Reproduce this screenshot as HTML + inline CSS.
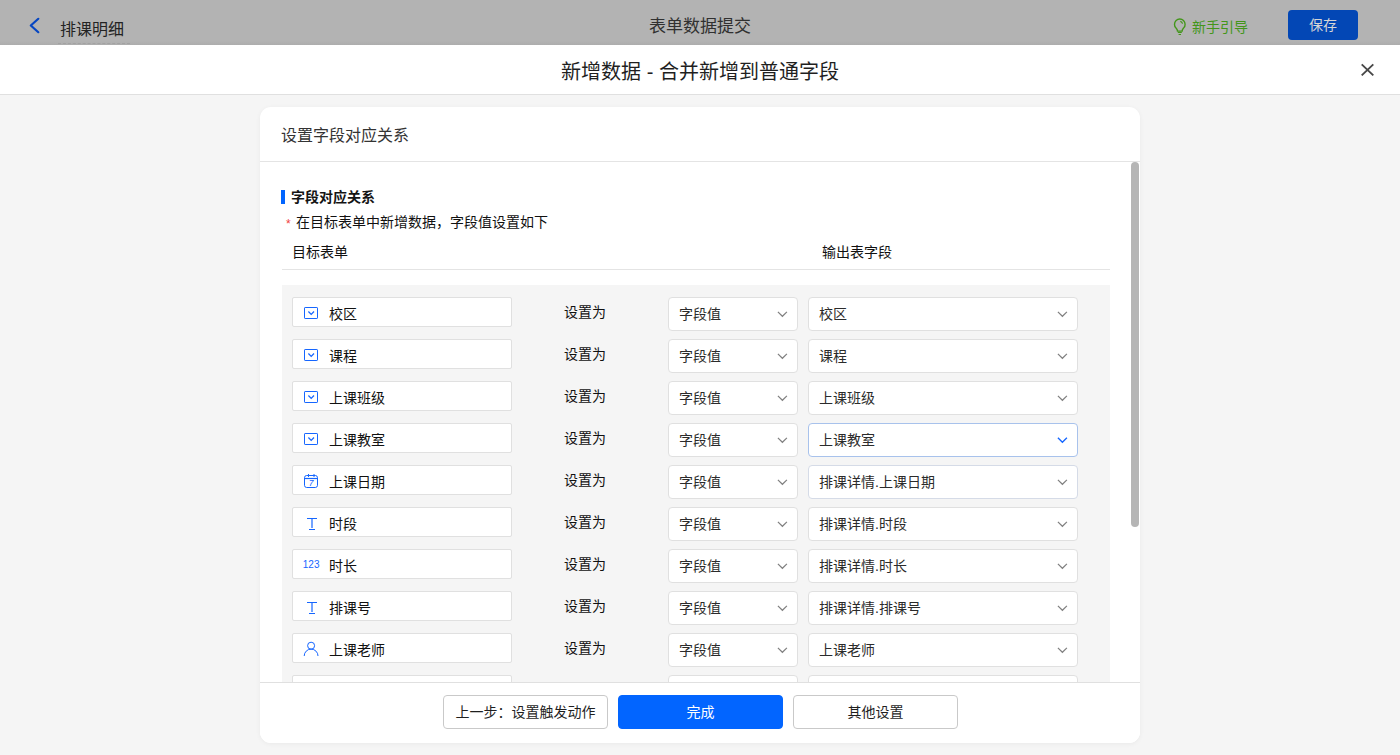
<!DOCTYPE html>
<html lang="zh-CN">
<head>
<meta charset="utf-8">
<title>表单数据提交</title>
<style>
*{box-sizing:border-box;margin:0;padding:0}
html,body{width:1400px;height:755px;overflow:hidden;background:#f5f5f5}
body{position:relative;font-family:"Liberation Sans","Noto Sans CJK SC",sans-serif;font-size:14px;color:#111;line-height:1}
.abs{position:absolute;white-space:nowrap}
/* top bar (dimmed) */
#topbar{position:absolute;left:0;top:0;width:1400px;height:45px;background:linear-gradient(#b3b3b3 0,#b3b3b3 41px,#adadad 45px)}
#back{left:29px;top:17px;width:11px;height:17px}
#appname{left:60px;top:21px;font-size:16px;color:#232323;line-height:18px}
#appname-line{left:58px;top:43px;width:72px;height:0;border-top:1px dashed #a2a2a2}
#toptitle{left:600px;width:200px;text-align:center;top:17px;font-size:17px;line-height:20px;color:#303030}
#guide{left:1192px;top:18px;font-size:14px;line-height:18px;color:#43961a}
#bulb{left:1172px;top:18px;width:15px;height:18px;overflow:visible}
#save{left:1288px;top:10px;width:70px;height:30px;border-radius:4px;background:#0347b5;color:#d6d6d6;font-size:14px;line-height:30px;text-align:center}
/* modal header */
#mhead{position:absolute;left:0;top:45px;width:1400px;height:50px;background:#fff;border-bottom:1px solid #e0e0e0}
#mtitle{left:400px;width:600px;text-align:center;top:60px;font-size:20px;line-height:24px;color:#1f1f1f}
#close{left:1360px;top:62px;width:15px;height:15px}
/* card */
#card{position:absolute;left:260px;top:107px;width:880px;height:636px;background:#fff;border-radius:11px;overflow:hidden;box-shadow:0 1px 5px rgba(0,0,0,.05)}
#chead{left:21px;top:19px;font-size:16px;line-height:20px;color:#333}
#cline{left:0;top:54px;width:880px;height:1px;background:#e4e4e4}
#scroll{position:absolute;left:0;top:55px;width:880px;height:520px;overflow:hidden}
#thumb{left:871px;top:0;width:8px;height:365px;border-radius:4px;background:#b5b5b5}
#bar{left:21px;top:28px;width:4px;height:14px;background:#0265ff}
#stitle{left:31px;top:26px;font-size:14px;font-weight:bold;line-height:18px;color:#141414}
#star{left:26px;top:55px;font-size:12px;line-height:14px;color:#f04040}
#sdesc{left:36px;top:51px;line-height:18px;color:#111}
#h1{left:32px;top:81px;line-height:18px}
#h2{left:562px;top:81px;line-height:18px}
#hline{left:22px;top:107px;width:828px;height:1px;background:#e4e4e4}
#gray{left:22px;top:123px;width:828px;height:420px;background:#f5f5f5}
.row{position:absolute;left:0;width:828px;height:34px}
.fin{position:absolute;left:10px;top:0;width:220px;height:30px;background:#fff;border:1px solid #e0e0e0;border-radius:2px}
.fin .ic{position:absolute;left:9px;top:6px;width:20px;height:18px}
.fin .tx{position:absolute;left:36px;top:7px;line-height:18px;white-space:nowrap}
.setas{position:absolute;left:260px;width:86px;top:6px;text-align:center;line-height:18px}
.sel{position:absolute;top:0;height:34px;background:#fff;border:1px solid #e0e0e0;border-radius:4px}
.sel.a{left:386px;width:130px}
.sel.b{left:526px;width:270px}
.sel .tx{position:absolute;left:10px;top:7px;line-height:18px;white-space:nowrap;color:#2b2b2b}
.sel svg{position:absolute;right:9px;top:12px;width:12px;height:8px}
.sel.focus{border-color:#a8c2ec}
/* footer */
#foot{position:absolute;left:0;top:575px;width:880px;height:61px;background:#fff;border-top:1px solid #e0e0e0}
.btn{position:absolute;top:12px;width:165px;height:34px;border-radius:4px;border:1px solid #c9c9c9;background:#fff;text-align:center;line-height:32px;font-size:14px;color:#1f1f1f}
.btn.p{background:#0265ff;border-color:#0265ff;color:#fff}
</style>
</head>
<body>
<div id="topbar"></div>
<svg id="back" class="abs" viewBox="0 0 11 17"><path d="M9.300 1.800 L1.800 8.500 L9.300 15.200" fill="none" stroke="#0646c2" stroke-width="2.200" stroke-linecap="round" stroke-linejoin="round"/></svg>
<div id="appname" class="abs">排课明细</div>
<div id="appname-line" class="abs"></div>
<div id="toptitle" class="abs">表单数据提交</div>
<svg id="bulb" class="abs" viewBox="0 0 15 18"><path d="M5.500 13.100 C5.500 11.600 4.700 10.900 3.900 9.900 A5.300 5.300 0 1 1 11.700 9.900 C10.900 10.900 10.100 11.600 10.100 13.100 Z" fill="none" stroke="#43961a" stroke-width="1.400"/><path d="M5.800 14.500 H9.800 M6.600 16.500 H9" stroke="#43961a" stroke-width="1" fill="none"/><path d="M8.300 3.400 A2.700 2.700 0 0 1 10.500 5.800" stroke="#43961a" stroke-width="1.100" fill="none"/></svg>
<div id="guide" class="abs">新手引导</div>
<div id="save" class="abs">保存</div>

<div id="mhead"></div>
<div id="mtitle" class="abs">新增数据 - 合并新增到普通字段</div>
<svg id="close" class="abs" viewBox="0 0 15 15"><path d="M1.700 2.400 L13.300 13.400 M13.300 2.400 L1.700 13.400" stroke="#484848" stroke-width="1.900" fill="none"/></svg>

<div id="card">
  <div id="chead" class="abs">设置字段对应关系</div>
  <div id="cline" class="abs"></div>
  <div id="scroll">
    <div id="bar" class="abs"></div>
    <div id="stitle" class="abs">字段对应关系</div>
    <div id="star" class="abs">*</div>
    <div id="sdesc" class="abs">在目标表单中新增数据，字段值设置如下</div>
    <div id="h1" class="abs">目标表单</div>
    <div id="h2" class="abs">输出表字段</div>
    <div id="hline" class="abs"></div>
    <div id="gray" class="abs">
      <div class="row" style="top:12px">
        <div class="fin"><svg class="ic" viewBox="0 0 20 18"><rect x="2.500" y="3.500" width="13" height="11" rx="0.600" fill="none" stroke="#1566ff" stroke-width="1"/><path d="M6.400 7.500 L9.200 10.400 L12 7.500" fill="none" stroke="#1566ff" stroke-width="1.250"/></svg><span class="tx">校区</span></div>
        <div class="setas">设置为</div>
        <div class="sel a"><span class="tx">字段值</span><svg viewBox="0 0 12 8"><path d="M1.900 1.900 L6.400 6.300 L10.900 1.900" fill="none" stroke="#808080" stroke-width="1.200"/></svg></div>
        <div class="sel b"><span class="tx">校区</span><svg viewBox="0 0 12 8"><path d="M1.900 1.900 L6.400 6.300 L10.900 1.900" fill="none" stroke="#808080" stroke-width="1.200"/></svg></div>
      </div>
      <div class="row" style="top:54px">
        <div class="fin"><svg class="ic" viewBox="0 0 20 18"><rect x="2.500" y="3.500" width="13" height="11" rx="0.600" fill="none" stroke="#1566ff" stroke-width="1"/><path d="M6.400 7.500 L9.200 10.400 L12 7.500" fill="none" stroke="#1566ff" stroke-width="1.250"/></svg><span class="tx">课程</span></div>
        <div class="setas">设置为</div>
        <div class="sel a"><span class="tx">字段值</span><svg viewBox="0 0 12 8"><path d="M1.900 1.900 L6.400 6.300 L10.900 1.900" fill="none" stroke="#808080" stroke-width="1.200"/></svg></div>
        <div class="sel b"><span class="tx">课程</span><svg viewBox="0 0 12 8"><path d="M1.900 1.900 L6.400 6.300 L10.900 1.900" fill="none" stroke="#808080" stroke-width="1.200"/></svg></div>
      </div>
      <div class="row" style="top:96px">
        <div class="fin"><svg class="ic" viewBox="0 0 20 18"><rect x="2.500" y="3.500" width="13" height="11" rx="0.600" fill="none" stroke="#1566ff" stroke-width="1"/><path d="M6.400 7.500 L9.200 10.400 L12 7.500" fill="none" stroke="#1566ff" stroke-width="1.250"/></svg><span class="tx">上课班级</span></div>
        <div class="setas">设置为</div>
        <div class="sel a"><span class="tx">字段值</span><svg viewBox="0 0 12 8"><path d="M1.900 1.900 L6.400 6.300 L10.900 1.900" fill="none" stroke="#808080" stroke-width="1.200"/></svg></div>
        <div class="sel b"><span class="tx">上课班级</span><svg viewBox="0 0 12 8"><path d="M1.900 1.900 L6.400 6.300 L10.900 1.900" fill="none" stroke="#808080" stroke-width="1.200"/></svg></div>
      </div>
      <div class="row" style="top:138px">
        <div class="fin"><svg class="ic" viewBox="0 0 20 18"><rect x="2.500" y="3.500" width="13" height="11" rx="0.600" fill="none" stroke="#1566ff" stroke-width="1"/><path d="M6.400 7.500 L9.200 10.400 L12 7.500" fill="none" stroke="#1566ff" stroke-width="1.250"/></svg><span class="tx">上课教室</span></div>
        <div class="setas">设置为</div>
        <div class="sel a"><span class="tx">字段值</span><svg viewBox="0 0 12 8"><path d="M1.900 1.900 L6.400 6.300 L10.900 1.900" fill="none" stroke="#808080" stroke-width="1.200"/></svg></div>
        <div class="sel b focus"><span class="tx">上课教室</span><svg viewBox="0 0 12 8"><path d="M1.900 1.700 L6.400 6.300 L10.900 1.700" fill="none" stroke="#1566ff" stroke-width="1.300"/></svg></div>
      </div>
      <div class="row" style="top:180px">
        <div class="fin"><svg class="ic" viewBox="0 0 20 18"><rect x="2.500" y="3.500" width="13" height="12" rx="2.200" fill="none" stroke="#1566ff" stroke-width="1"/><path d="M2.500 6.500 H15.500" stroke="#1566ff" stroke-width="1.200" fill="none"/><path d="M6.500 2 V5 M12 2 V5" stroke="#1566ff" stroke-width="1" fill="none"/><text x="6.700" y="14.200" font-family="Liberation Sans, sans-serif" font-size="8.500" font-style="italic" fill="#1566ff">7</text></svg><span class="tx">上课日期</span></div>
        <div class="setas">设置为</div>
        <div class="sel a"><span class="tx">字段值</span><svg viewBox="0 0 12 8"><path d="M1.900 1.900 L6.400 6.300 L10.900 1.900" fill="none" stroke="#808080" stroke-width="1.200"/></svg></div>
        <div class="sel b" style="border-color:#d5dbe7"><span class="tx">排课详情.上课日期</span><svg viewBox="0 0 12 8"><path d="M1.900 1.900 L6.400 6.300 L10.900 1.900" fill="none" stroke="#808080" stroke-width="1.200"/></svg></div>
      </div>
      <div class="row" style="top:222px">
        <div class="fin"><svg class="ic" viewBox="0 0 20 18"><path d="M5 4.500 H15 M7 15.500 H13" stroke="#1566ff" stroke-width="1" fill="none"/><path d="M10 5 V14" stroke="#1566ff" stroke-width="1.200" fill="none"/></svg><span class="tx">时段</span></div>
        <div class="setas">设置为</div>
        <div class="sel a"><span class="tx">字段值</span><svg viewBox="0 0 12 8"><path d="M1.900 1.900 L6.400 6.300 L10.900 1.900" fill="none" stroke="#808080" stroke-width="1.200"/></svg></div>
        <div class="sel b"><span class="tx">排课详情.时段</span><svg viewBox="0 0 12 8"><path d="M1.900 1.900 L6.400 6.300 L10.900 1.900" fill="none" stroke="#808080" stroke-width="1.200"/></svg></div>
      </div>
      <div class="row" style="top:264px">
        <div class="fin"><svg class="ic" viewBox="0 0 20 18"><text x="0.800" y="12.200" font-family="Liberation Sans, sans-serif" font-size="10" fill="#1566ff">123</text></svg><span class="tx">时长</span></div>
        <div class="setas">设置为</div>
        <div class="sel a"><span class="tx">字段值</span><svg viewBox="0 0 12 8"><path d="M1.900 1.900 L6.400 6.300 L10.900 1.900" fill="none" stroke="#808080" stroke-width="1.200"/></svg></div>
        <div class="sel b"><span class="tx">排课详情.时长</span><svg viewBox="0 0 12 8"><path d="M1.900 1.900 L6.400 6.300 L10.900 1.900" fill="none" stroke="#808080" stroke-width="1.200"/></svg></div>
      </div>
      <div class="row" style="top:306px">
        <div class="fin"><svg class="ic" viewBox="0 0 20 18"><path d="M5 4.500 H15 M7 15.500 H13" stroke="#1566ff" stroke-width="1" fill="none"/><path d="M10 5 V14" stroke="#1566ff" stroke-width="1.200" fill="none"/></svg><span class="tx">排课号</span></div>
        <div class="setas">设置为</div>
        <div class="sel a"><span class="tx">字段值</span><svg viewBox="0 0 12 8"><path d="M1.900 1.900 L6.400 6.300 L10.900 1.900" fill="none" stroke="#808080" stroke-width="1.200"/></svg></div>
        <div class="sel b"><span class="tx">排课详情.排课号</span><svg viewBox="0 0 12 8"><path d="M1.900 1.900 L6.400 6.300 L10.900 1.900" fill="none" stroke="#808080" stroke-width="1.200"/></svg></div>
      </div>
      <div class="row" style="top:348px">
        <div class="fin"><svg class="ic" viewBox="0 0 20 18"><circle cx="9.100" cy="5.700" r="3.500" fill="none" stroke="#1566ff" stroke-width="1"/><path d="M2.200 16 A6.900 6.900 0 0 1 16 16" fill="none" stroke="#1566ff" stroke-width="1"/></svg><span class="tx">上课老师</span></div>
        <div class="setas">设置为</div>
        <div class="sel a"><span class="tx">字段值</span><svg viewBox="0 0 12 8"><path d="M1.900 1.900 L6.400 6.300 L10.900 1.900" fill="none" stroke="#808080" stroke-width="1.200"/></svg></div>
        <div class="sel b"><span class="tx">上课老师</span><svg viewBox="0 0 12 8"><path d="M1.900 1.900 L6.400 6.300 L10.900 1.900" fill="none" stroke="#808080" stroke-width="1.200"/></svg></div>
      </div>
      <div class="row" style="top:390px">
        <div class="fin"><span class="tx"></span></div>
        <div class="setas"></div>
        <div class="sel a"><span class="tx"></span><svg viewBox="0 0 12 8"><path d="M1.900 1.900 L6.400 6.300 L10.900 1.900" fill="none" stroke="#808080" stroke-width="1.200"/></svg></div>
        <div class="sel b"><span class="tx"></span><svg viewBox="0 0 12 8"><path d="M1.900 1.900 L6.400 6.300 L10.900 1.900" fill="none" stroke="#808080" stroke-width="1.200"/></svg></div>
      </div>
    </div>
    <div id="thumb" class="abs"></div>
  </div>
  <div id="foot">
    <div class="btn" style="left:183px">上一步：设置触发动作</div>
    <div class="btn p" style="left:358px">完成</div>
    <div class="btn" style="left:533px">其他设置</div>
  </div>
</div>
</body>
</html>
